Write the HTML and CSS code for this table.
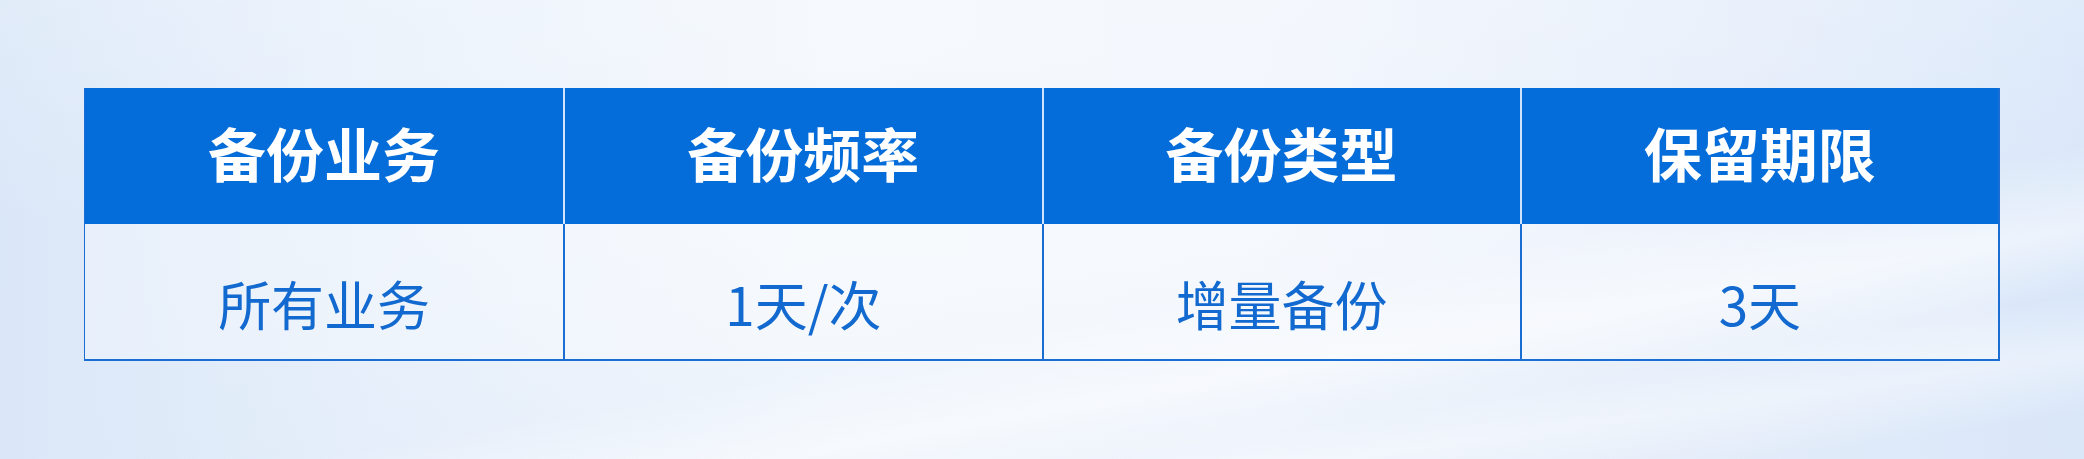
FILE: index.html
```html
<!DOCTYPE html>
<html lang="zh-CN">
<head>
<meta charset="utf-8">
<title>备份策略</title>
<link rel="stylesheet" href="styles.css">
</head>
<body>
<div class="page">
  <div class="table">
    <div class="cell head">备份业务</div>
    <div class="cell head">备份频率</div>
    <div class="cell head">备份类型</div>
    <div class="cell head">保留期限</div>
    <div class="cell body">所有业务</div>
    <div class="cell body">1天/次</div>
    <div class="cell body">增量备份</div>
    <div class="cell body">3天</div>
  </div>
</div>
</body>
</html>
```
FILE: styles.css
```css
html, body {
  margin: 0;
  padding: 0;
}
body {
  width: 2084px;
  height: 459px;
  overflow: hidden;
  font-family: "Noto Sans CJK SC", "Noto Sans", sans-serif;
  background:
    linear-gradient(170deg, rgba(255,255,255,0) 62%, rgba(255,255,255,0.5) 72%, rgba(255,255,255,0) 80%),
    linear-gradient(172deg, rgba(255,255,255,0) 78%, rgba(255,255,255,0.4) 86%, rgba(255,255,255,0) 94%),
    linear-gradient(180deg, rgba(255,255,255,0.2) 0%, rgba(255,255,255,0) 50%, rgba(220,232,248,0.3) 100%),
    linear-gradient(90deg, #dae7f8 0%, #e9f1fb 18%, #f4f8fd 40%, #f2f6fd 60%, #e6eefa 82%, #d8e6f9 100%);
}
.page {
  padding: 88px 84px 0 84px;
}
.table {
  width: 1916px;
  display: grid;
  grid-template-columns: repeat(4, 1fr);
  grid-template-rows: 136px 135px;
  box-sizing: border-box;
  border-left: 1px solid #1a6dd2;
  border-right: 2px solid #1a6dd2;
  border-bottom: 2px solid #1a6dd2;
}
.cell {
  display: flex;
  align-items: center;
  justify-content: center;
  box-sizing: border-box;
}
.head {
  background: #046dd9;
  color: #ffffff;
  font-weight: 700;
  font-size: 58px;
  padding-bottom: 8px;
  border-left: 2px solid #cde4fa;
}
.head:first-child {
  border-left: none;
}
.body {
  background: rgba(255,255,255,0.3);
  color: #1269cf;
  font-weight: 400;
  font-size: 53px;
  padding-top: 22px;
  border-left: 2px solid #1a6dd2;
}
.body:nth-child(5) {
  border-left: none;
}
```
